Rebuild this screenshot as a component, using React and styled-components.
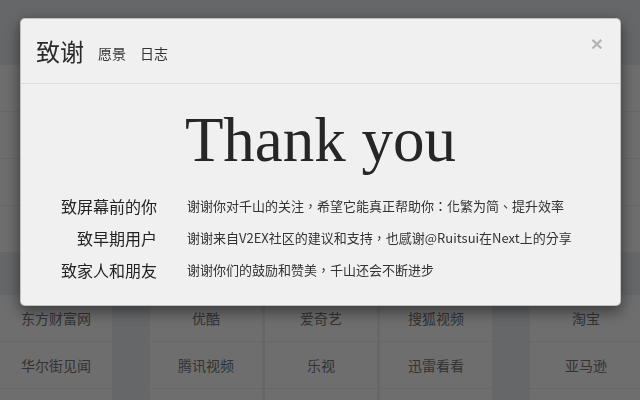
import styled, { createGlobalStyle } from 'styled-components';

const GlobalStyle = createGlobalStyle`
  html, body {
    margin: 0;
    padding: 0;
    width: 640px;
    height: 400px;
    overflow: hidden;
    background: #cdcfd3;
    font-family: "Noto Sans CJK SC", "Noto Sans", sans-serif;
  }
`;

const Page = styled.div`
  display: flex;
  flex-direction: column;
  gap: 1px;
  padding-top: 65px;
  width: 660px;
  height: 335px;
  overflow: hidden;
`;

const Section = styled.div`
  display: flex;
  flex-direction: column;
  gap: 1px;
  margin-top: ${({ $offset }) => $offset || 0}px;
`;

const Row = styled.div`
  display: flex;
  height: 46px;
  flex: none;
`;

const Cell = styled.div`
  flex: 0 0 112px;
  margin-left: ${({ $gap }) => $gap || 0}px;
  background: #dcdcdc;
  display: flex;
  align-items: center;
  justify-content: center;
  font-size: 14px;
  color: #666;
`;

const Overlay = styled.div`
  position: fixed;
  inset: 0;
  background: rgba(0, 0, 0, 0.5);
  display: flex;
  justify-content: center;
  align-items: flex-start;
  padding-top: 18px;
`;

const Modal = styled.div`
  width: 599px;
  background: #f0f0f0;
  border-radius: 5px;
  border: 1px solid rgba(0, 0, 0, 0.2);
  box-shadow: 0 5px 15px rgba(0, 0, 0, 0.5);
  margin-left: 1px;
`;

const Header = styled.div`
  display: flex;
  align-items: center;
  padding: 15px 16px 15px 15px;
  height: 34px;
  border-bottom: 1px solid #dcdcdc;
`;

const Title = styled.h4`
  margin: 0;
  font-size: 24px;
  font-weight: 400;
  color: #2a2a2a;
  line-height: 34px;
`;

const Tab = styled.span`
  margin-left: 14px;
  font-size: 14px;
  color: #333;
  line-height: 34px;
  padding-top: 4px;
`;

const Close = styled.button`
  margin-left: auto;
  margin-right: 1px;
  margin-top: -16px;
  background: none;
  border: 0;
  padding: 0;
  font-family: "Liberation Sans", Arial, sans-serif;
  font-size: 21px;
  font-weight: 700;
  line-height: 1;
  color: #000;
  opacity: 0.25;
  cursor: pointer;
`;

const Body = styled.div`
  padding: 18px 0 19px;
`;

const Hero = styled.div`
  font-family: "Liberation Serif", "Times New Roman", serif;
  font-size: 63px;
  line-height: 77px;
  color: #262626;
  text-align: center;
  margin-bottom: 11px;
`;

const ThanksList = styled.div`
  display: grid;
  grid-template-columns: 136px 1fr;
  column-gap: 30px;
`;

const Label = styled.div`
  font-size: 16px;
  font-weight: 400;
  line-height: 32px;
  color: #222;
  text-align: right;
`;

const Text = styled.div`
  font-family: "Noto Sans CJK TC", "Noto Sans CJK SC", sans-serif;
  font-size: 13px;
  line-height: 32px;
  color: #333;
`;

const thanks = [
  ['致屏幕前的你', '谢谢你对千山的关注，希望它能真正帮助你：化繁为简、提升效率'],
  ['致早期用户', '谢谢来自V2EX社区的建议和支持，也感谢@Ruitsui在Next上的分享'],
  ['致家人和朋友', '谢谢你们的鼓励和赞美，千山还会不断进步'],
];

const sites = [
  ['东方财富网', '优酷', '爱奇艺', '搜狐视频', '淘宝'],
  ['华尔街见闻', '腾讯视频', '乐视', '迅雷看看', '亚马逊'],
];

const gaps = [0, 38, 3, 3, 38];

const SiteRow = ({ items = ['', '', '', '', ''] }) => (
  <Row>
    {items.map((name, i) => (
      <Cell key={i} $gap={gaps[i]}>{name}</Cell>
    ))}
  </Row>
);

export default function App() {
  return (
    <>
      <GlobalStyle />
      <Page>
        <Section>
          <SiteRow />
          <SiteRow />
          <SiteRow />
          <SiteRow />
        </Section>
        <Section $offset={42}>
          {sites.map((r, i) => (
            <SiteRow key={i} items={r} />
          ))}
          <SiteRow />
        </Section>
      </Page>
      <Overlay>
        <Modal>
          <Header>
            <Title>致谢</Title>
            <Tab>愿景</Tab>
            <Tab>日志</Tab>
            <Close aria-label="关闭">×</Close>
          </Header>
          <Body>
            <Hero>Thank you</Hero>
            <ThanksList>
              {thanks.map(([who, msg]) => [
                <Label key={who}>{who}</Label>,
                <Text key={msg}>{msg}</Text>,
              ])}
            </ThanksList>
          </Body>
        </Modal>
      </Overlay>
    </>
  );
}
